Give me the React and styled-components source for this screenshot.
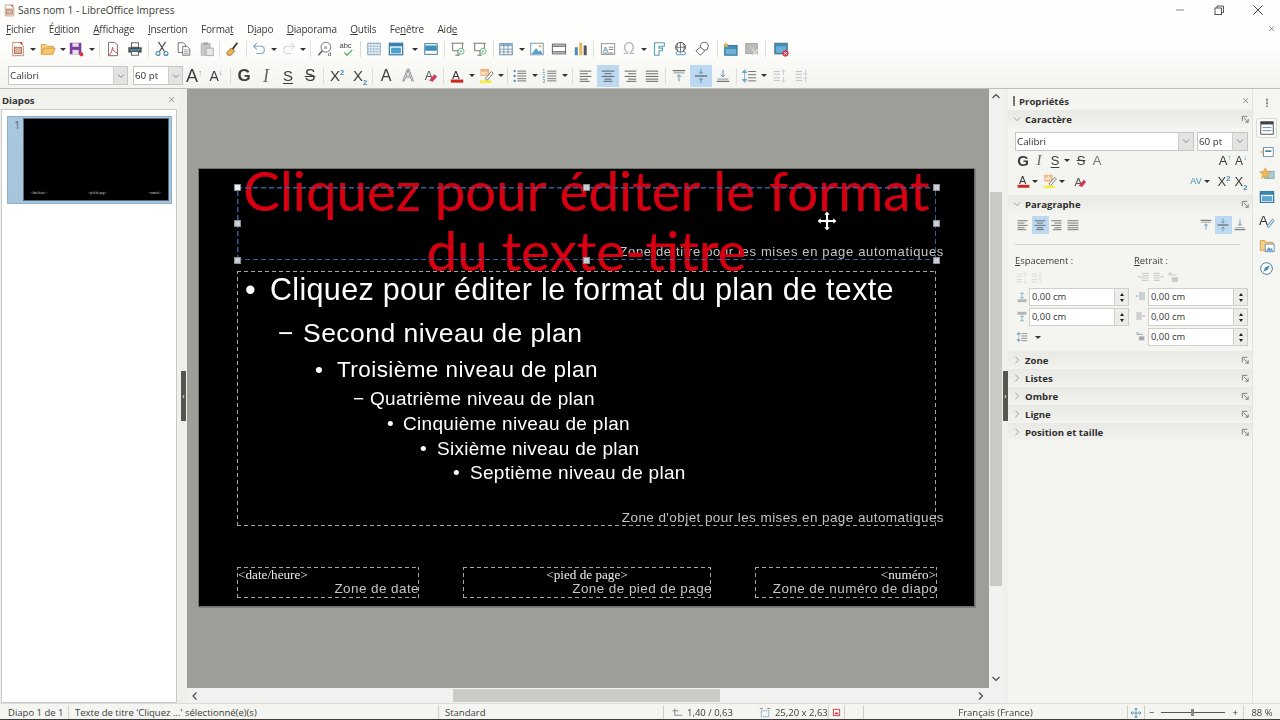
import React from 'react';
import styled, { createGlobalStyle, css } from 'styled-components';

const Global = createGlobalStyle`
  html, body { margin: 0; padding: 0; width: 1280px; height: 720px; overflow: hidden; background: #f4f4f0; }
  * { box-sizing: border-box; }
  body { font-family: "Open Sans", "Noto Sans", sans-serif; color: #333; }
`;

const BLUE = '#4a8bb0';

const dashes = (color, t, on, off) => css`
  background-image:
    repeating-linear-gradient(90deg, ${color} 0 ${on}px, transparent ${on}px ${on + off}px),
    repeating-linear-gradient(90deg, ${color} 0 ${on}px, transparent ${on}px ${on + off}px),
    repeating-linear-gradient(0deg, ${color} 0 ${on}px, transparent ${on}px ${on + off}px),
    repeating-linear-gradient(0deg, ${color} 0 ${on}px, transparent ${on}px ${on + off}px);
  background-size: 100% ${t}px, 100% ${t}px, ${t}px 100%, ${t}px 100%;
  background-position: 0 0, 0 100%, 0 0, 100% 0;
  background-repeat: no-repeat;
`;

const Page = styled.div`
  width: 1280px; height: 720px; display: flex; flex-direction: column; overflow: hidden;
  filter: blur(0.25px);
`;
const Top = styled.div`background: linear-gradient(#fefefc, #fdfdfb 55%, #f3f3ef);`;
const TitleBar = styled.div`
  height: 20px; display: flex; align-items: center; padding-left: 3px; font-size: 10.2px; color: #3a3a3a; gap: 2px;
`;
const WinButtons = styled.div`margin-left: auto; display: flex; margin-right: 3px;`;
const WinBtn = styled.div`width: 39px; height: 20px; display: flex; align-items: center; justify-content: center;`;
const MenuBar = styled.div`
  height: 18px; display: flex; align-items: center; padding-left: 6px; font-size: 10px; letter-spacing: -0.22px; color: #3a3a3a; position: relative;
  u { text-decoration-thickness: 1px; text-underline-offset: 1px; }
`;
const MenuItem = styled.span`margin-right: 13.5px;`;
const DocClose = styled.div`margin-left: auto; margin-right: 4px; display: flex;`;
const ToolRow = styled.div`height: ${p => p.$h}px; padding-bottom: ${p => p.$pb || 0}px; display: flex; align-items: center; position: relative;`;
const Slot = styled.div`
  flex: none; height: ${p => p.$h || 22}px; width: ${p => p.$w}px; margin-left: ${p => p.$ml}px;
  display: flex; align-items: center; justify-content: center;
  ${p => p.$active && css`background: #bcd9f1;`}
`;
const Sep = styled.div`width: 1px; height: 16px; background: #dcdcd8;`;
const Drop = styled.div`
  width: 0; height: 0; border-left: 3px solid transparent; border-right: 3px solid transparent; border-top: 3px solid #333;
`;
const Combo = styled.div`
  width: 100%; height: 19px; display: flex; align-items: stretch; background: #fff; border: 1px solid #c5c5c2;
`;
const ComboText = styled.div`flex: 1; font-size: 9.8px; line-height: 17px; padding-left: 1px; color: #333; white-space: nowrap; overflow: hidden;`;
const ComboBtn = styled.div`
  width: ${p => p.$w || 14}px; background: #e3e3e1; border-left: 1px solid #cfcfcc;
  display: flex; align-items: center; justify-content: center;
`;
const Glyph = styled.span`
  font-family: "Liberation Sans", sans-serif; font-size: ${p => p.$s || 14}px; line-height: 1; color: ${p => p.$c || '#3c3c3c'};
  font-weight: ${p => p.$b ? 700 : 400}; white-space: nowrap; position: relative;
  ${p => p.$serif && css`font-family: "Liberation Serif", serif; font-style: italic; color: #666;`}
  ${p => p.$u && css`text-decoration: underline; text-underline-offset: 2px;`}
  ${p => p.$x && css`text-decoration: line-through;`}
  ${p => p.$outline && css`color: #fff; -webkit-text-stroke: 0.7px #777;`}
  sup, sub { font-size: 7.5px; color: ${BLUE}; font-weight: 700; line-height: 0; }
`;

const Main = styled.div`flex: 1; display: flex; min-height: 0; border-top: 1px solid #bdbdb9;`;
const LeftPanel = styled.div`width: 178px; flex: none; background: #f1f1ee; display: flex; flex-direction: column;`;
const PanelHead = styled.div`
  height: 20px; flex: none; padding: 2px 2px 0; display: flex; align-items: center; justify-content: space-between;
  font-size: 9.6px; font-weight: 700; color: #333;
`;
const SlideList = styled.div`flex: 1; margin: 0 1px 0 1px; background: #fff; border: 1px solid #c8c8c5; padding: 6px 5px;`;
const SlideThumb = styled.div`
  height: 88px; width: 165px; background: linear-gradient(#a8c8e0, #a6c4dc); display: flex; padding: 2px 3px 3px 0;
  box-shadow: inset 0 0 0 1px #8fb0ca;
`;
const ThumbNum = styled.div`width: 16px; font-size: 10px; color: #46627a; text-align: right; padding: 0 3px 0 0; flex: none;`;
const ThumbSlide = styled.div`
  flex: 1; background: #000; border: 1px solid #5a6a78; display: flex; align-items: flex-end; justify-content: space-between; padding: 0 7px 5px;
`;
const ThumbText = styled.span`font-family: "Liberation Serif", serif; font-size: 3px; color: #ddd; line-height: 1;`;
const Splitter = styled.div`
  flex: none; width: ${p => p.$w}px; background: #efefec; display: flex; align-items: center; justify-content: flex-end;
  padding-right: ${p => p.$pr}px;
`;
const SplitHandle = styled.div`
  width: 5px; height: 50px; background: #55574f; display: flex; align-items: center; justify-content: center; flex: none;
  color: #fff; font-size: 7px; line-height: 1; font-family: "Liberation Sans", sans-serif; overflow: hidden;
`;
const Center = styled.div`flex: 1; display: flex; flex-direction: column; min-width: 0;`;
const CenterTop = styled.div`flex: 1; display: flex; min-height: 0;`;
const Workspace = styled.div`flex: 1; min-width: 0; background: #9e9e99; padding: 79px 0 0 11px;`;
const VScroll = styled.div`
  flex: none; width: 14px; background: #f1f1ef; display: flex; flex-direction: column; align-items: center; justify-content: space-between; padding: 3px 0 4px;
  position: relative;
`;
const VThumb = styled.div`position: absolute; top: 103px; left: 1px; width: 12px; height: 394px; background: #c9c9c6;`;
const HScroll = styled.div`
  flex: none; height: 15px; background: #f1f1ef; display: flex; align-items: center; justify-content: space-between; padding: 0 17px 0 3px; position: relative;
`;
const HThumb = styled.div`position: absolute; left: 266px; top: 1px; width: 267px; height: 13px; background: #cbcbc8;`;

const Slide = styled.div`
  position: relative; width: 777px; height: 439px; background: #000; border: 1px solid #70716c; box-shadow: 1px 1px 0 #80817c;
`;
const SlideLabel = styled.div`
  position: absolute; left: ${p => p.$x}px; top: ${p => p.$y}px; width: ${p => p.$w}px; font-family: "Liberation Sans", sans-serif;
  font-size: ${p => p.$s}px; color: #c4c4c4; text-align: right; white-space: nowrap; line-height: 1;
  letter-spacing: ${p => p.$ls}px;
`;
const Placeholder = styled.div`
  position: absolute; left: ${p => p.$x}px; top: ${p => p.$y}px; width: ${p => p.$w}px; height: ${p => p.$h}px;
  ${dashes('#a6a6a6', 1, 4, 3)}
`;
const FieldText = styled.div`
  position: absolute; left: ${p => p.$x}px; top: ${p => p.$y}px; width: ${p => p.$w}px; font-family: "Liberation Serif", serif; font-size: 13.2px; color: #eee;
  text-align: ${p => p.$a}; line-height: 1; white-space: nowrap;
`;
const SlideTitle = styled.div`
  position: absolute; left: 38px; top: -9px; width: 699px; font-family: Lato, sans-serif; font-size: 54.7px; line-height: 60px; color: #d60012; text-align: center; white-space: nowrap;
  -webkit-text-stroke: 0.2px #d60012;
`;
const Outline = styled.div`position: absolute; left: 38px; top: 102px; width: 699px; display: flex; flex-direction: column;`;
const Level = styled.div`
  display: flex; height: ${p => p.$h}px; align-items: center; font-family: "Liberation Sans", sans-serif; color: #fff; font-size: ${p => p.$s}px;
  padding-left: ${p => p.$x}px; white-space: nowrap; letter-spacing: ${p => p.$ls}px;
`;
const Bullet = styled.span`flex: none; width: ${p => p.$w}px;`;
const Selection = styled.div`
  position: absolute; left: 38px; top: 18px; width: 699px; height: 73px;
  ${dashes('#33609a', 1.5, 5, 3)}
`;
const Handle = styled.div`
  position: absolute; width: 7px; height: 7px; background: ${p => p.$first ? '#eceeef' : '#c9ccd0'}; border: 1px solid #8a8f96; left: ${p => p.$x}px; top: ${p => p.$y}px; margin: -3.5px;
`;
const Cursor = styled.svg`position: absolute; left: 617px; top: 41px;`;

const Sidebar = styled.div`width: 245px; flex: none; background: #f4f4f1; display: flex; flex-direction: column; border-right: 1px solid #e2e2de;`;
const SideHead = styled.div`
  height: 21px; flex: none; display: flex; align-items: center; padding: 3px 2px 0 5px; font-size: 9.6px; font-weight: 700; color: #333; gap: 4px;
`;
const Grip = styled.div`width: 2px; height: 10px; background-image: radial-gradient(#666 0.8px, transparent 1px); background-size: 2px 3px;`;
const CloseSlot = styled.div`margin-left: auto; display: flex;`;
const DeckHead = styled.div`
  height: 18px; flex: none; display: flex; align-items: center; padding: 0 2px 0 5px; font-size: 9.6px; font-weight: 700; color: #2d2d2d;
  background: linear-gradient(#e8e8e4, #f2f2ef); gap: 4px;
`;
const DeckBody = styled.div`padding-top: ${p => p.$pt}px; padding-bottom: ${p => p.$pb}px; display: flex; flex-direction: column;`;
const DeckRow = styled.div`display: flex; align-items: center; height: ${p => p.$h}px; flex: none; position: relative;`;
const Rule = styled.div`height: 1px; background: #cfcfcb; margin: 10px 12px 0 7px;`;
const Columns = styled.div`display: grid; grid-template-columns: 119px 110px; padding: 8px 0 0 7px; font-size: 9.4px; color: #3a3a3a;`;
const ColHead = styled.div`height: 15px; line-height: 15px; u { text-underline-offset: 1px; }`;
const IconLine = styled.div`height: 19px; display: flex; align-items: center; gap: 1px; padding-left: ${p => p.$pad}px; opacity: 0.55;`;
const SpinRow = styled.div`height: 20px; display: flex; align-items: center;`;
const SpinIcon = styled.div`width: 14px; flex: none; display: flex; align-items: center; justify-content: center;`;
const Spin = styled.div`
  width: ${p => p.$w}px; flex: none; height: 18px; background: #fff; border: 1px solid #cfcfcc; display: flex; font-size: 9.4px; line-height: 16px; color: #333;
`;
const SpinText = styled.div`flex: 1; padding-left: 2px;`;
const SpinBtns = styled.div`width: 14px; background: #ecece9; border-left: 1px solid #cfcfcc; display: flex; flex-direction: column; align-items: center; justify-content: center; gap: 3px;`;
const Up = styled.div`width: 0; height: 0; border-left: 2.5px solid transparent; border-right: 2.5px solid transparent; border-bottom: 3px solid #222;`;
const Down = styled(Up)`border-bottom: 0; border-top: 3px solid #222;`;
const TabBar = styled.div`width: 27px; flex: none; display: flex; flex-direction: column; align-items: center; background: #f5f5f2; padding-top: 5px;`;
const TabItem = styled.div`
  height: ${p => p.$h}px; width: 21px; flex: none; display: flex; align-items: center; justify-content: center; margin-top: ${p => p.$mt || 0}px;
  ${p => p.$active && css`border: 1px solid #d8d8d5; border-radius: 2px; background: #f9f9f7;`}
`;
const Dots = styled.div`width: 2px; height: 9px; background-image: radial-gradient(#888 0.7px, transparent 1px); background-size: 2px 3.5px;`;

const StatusBar = styled.div`
  height: 17px; flex: none; display: flex; align-items: stretch; font-size: 9.5px; color: #3d3d3d; background: #f4f4f1;
  border-bottom: 1px solid #3c3c3c; border-top: 1px solid #dcdcd8;
`;
const Cell = styled.div`
  width: ${p => p.$w}px; flex: none; display: flex; align-items: center; justify-content: ${p => p.$j || 'flex-start'}; padding-left: ${p => p.$p || 0}px; padding-top: 1px; gap: 4px;
  border-right: ${p => p.$nb ? 0 : '1px solid #cfcfcb'}; white-space: nowrap; margin: 1px 0 0;
`;
const CellGap = styled.span`width: 18px;`;
const ZoomTrack = styled.div`width: 64px; height: 1px; background: #555; position: relative; margin: 0 3px;`;
const ZoomKnob = styled.div`position: absolute; left: 30px; top: -3px; width: 3px; height: 7px; background: #888;`;
const Svg = styled.svg`display: block; flex: none;`;

/* ---------- icons ---------- */
const L = ({ d, c = '#555', w = 1 }) => d.map(([a, b, y], i) => <line key={i} x1={a} x2={b} y1={y} y2={y} stroke={c} strokeWidth={w} />);
const I = {
  newdoc: <><path d="M3 1.5h8l4 4v11H3z" fill="#fff" stroke="#b9846a" /><path d="M10 1l4 0v4z" fill="#d9503f" /><rect x="5" y="7" width="8" height="7" fill="#d7b79f" stroke="#a66f52" /></>,
  open: <><path d="M1.5 15V4h5l1.500 2h7v2" fill="#f6d28b" stroke="#d39a3c" /><path d="M1.500 15l2.500-7h13l-2.500 7z" fill="#f5c56b" stroke="#d39a3c" /></>,
  save: <><path d="M2 2h13v13H2z" fill="#7c3f9d" /><rect x="5" y="2.500" width="7" height="4" fill="#e8dced" /><rect x="5" y="10" width="7" height="5" fill="#e8dced" /><circle cx="15" cy="15" r="2.300" fill="#e2323c" /></>,
  pdf: <><path d="M4 1.500h7l3 3v12H4z" fill="#fff" stroke="#666" /><path d="M4 16c3-1 4-5 4.500-9 .5 4 2 6 6 6" fill="none" stroke="#cf3f3f" /></>,
  print: <><rect x="5" y="2" width="8" height="5" fill="#fff" stroke="#555" /><rect x="1.500" y="7" width="15" height="6" fill="#4a4a4a" /><rect x="3" y="9" width="12" height="2" fill="#4a8bb0" /><rect x="5" y="12" width="8" height="4" fill="#fff" stroke="#555" /></>,
  cut: <><path d="M5 1l7 11M13 1L6 12" stroke="#444" strokeWidth="1.200" fill="none" /><circle cx="4.500" cy="14" r="2.200" fill="none" stroke={BLUE} strokeWidth="1.300" /><circle cx="13.500" cy="14" r="2.200" fill="none" stroke={BLUE} strokeWidth="1.300" /></>,
  copy: <><path d="M2.500 2h6l2 2v9h-8z" fill="#fff" stroke="#666" /><path d="M7.500 6h5l3 3v7h-8z" fill="#fff" stroke="#666" /><L d={[[9, 14, 10], [9, 14, 12], [9, 14, 14]]} c="#9a9a9a" /></>,
  paste: <><rect x="2.500" y="3" width="10" height="13" fill="#c8c8c6" stroke="#b0b0ae" /><rect x="5" y="1.500" width="5" height="3" fill="#a9a9a7" /><rect x="8" y="8" width="8" height="8.500" fill="#e6e6e4" stroke="#aaa" /></>,
  clone: <><path d="M9 10l6-8" stroke="#333" strokeWidth="2" /><path d="M3 13l5-5 4 3-4 5-4 0z" fill="#e3b25a" stroke="#a97b2f" /></>,
  undo: <><path d="M3 6h8a4 4 0 0 1 0 8H6" fill="none" stroke="#7ea7c0" strokeWidth="1.200" /><path d="M6.500 2.500L3 6l3.500 3.500" fill="none" stroke="#7ea7c0" strokeWidth="1.200" /></>,
  redo: <><path d="M15 6H7a4 4 0 0 0 0 8h5" fill="none" stroke="#d5d5d2" strokeWidth="1.200" /><path d="M11.500 2.500L15 6l-3.500 3.500" fill="none" stroke="#d5d5d2" strokeWidth="1.200" /></>,
  find: <><circle cx="10" cy="7" r="5.500" fill="#fff" stroke="#666" /><path d="M6 11l-4.500 5" stroke="#555" strokeWidth="1.600" /><text x="7.600" y="9.500" fontSize="7" fontFamily="Liberation Sans" fill={BLUE}>a</text><text x="12" y="17" fontSize="7" fontFamily="Liberation Sans" fill="#444">d</text></>,
  spell: <><text x="0.500" y="8" fontSize="8.500" fontFamily="Liberation Sans" fill="#444">abc</text><path d="M6 13l3 3 6-6" fill="none" stroke="#57b06d" strokeWidth="1.500" /></>,
  grid: <><rect x="2" y="2.500" width="14" height="13" fill="#eef3f7" stroke="#7b9bb0" /><path d="M2 6h14M2 9h14M2 12h14M5.500 2v14M9 2v14M12.500 2v14" stroke={BLUE} strokeWidth=".8" strokeDasharray="1 1" /></>,
  master: <><rect x="1.500" y="2.500" width="15" height="13" fill="#fff" stroke="#2f6f96" strokeWidth="1.300" /><rect x="2" y="3" width="14" height="3" fill="#2f7fae" /><rect x="3.500" y="7.500" width="11" height="6.500" fill="#4aa0cf" /></>,
  slide: <><rect x="2" y="3" width="14" height="12" fill="#fff" stroke="#2f6f96" /><rect x="2.500" y="5" width="13" height="6" fill="#3f8fbe" /></>,
  startA: <><path d="M1.500 2.500h14M3 3v8h11V3" fill="#fff" stroke="#666" /><path d="M9 11v5M6 16h5" stroke="#666" /><circle cx="12.500" cy="11.500" r="3.300" fill="#fff" stroke="#5bb075" /><path d="M11.500 10l2.500 1.500-2.500 1.500z" fill="#5bb075" /></>,
  table: <><rect x="2" y="3" width="14" height="12.500" fill="#fff" stroke="#557f99" /><rect x="2" y="3" width="14" height="3" fill="#8eb6cf" /><path d="M2 9.200h14M2 12.300h14M6.600 3v12M11.300 3v12" stroke="#557f99" strokeWidth=".8" /></>,
  image: <><rect x="2" y="2.500" width="14" height="13" fill="#fff" stroke="#6b8da3" /><path d="M3 14.500L8 8l3 4 2-2 2 4.500z" fill="#5a9fc9" /><circle cx="12.500" cy="6" r="1.500" fill="#edba5a" /></>,
  video: <><rect x="1.500" y="3.500" width="15" height="11" fill="#fff" stroke="#555" /><path d="M1.500 6h15M1.500 12h15" stroke="#555" /><path d="M3 5h12M3 13.200h12" stroke="#555" strokeDasharray="1 1.200" /></>,
  chart: <><rect x="2" y="7" width="3.400" height="9" fill="#4a8bb0" /><rect x="7" y="2" width="3.400" height="14" fill="#eab65a" /><rect x="12" y="5" width="3.400" height="11" fill="#555" /></>,
  textbox: <><rect x="1.500" y="3" width="15" height="12" fill="#fff" stroke="#888" /><text x="3" y="12" fontSize="9" fontFamily="Liberation Sans" fill={BLUE}>A</text><L d={[[10, 15, 7], [10, 15, 9.500], [3, 15, 13.500]]} c="#777" /></>,
  fontwork: <path d="M4 2h11v4H9v2h4v3H9v5H4z" fill="#fff" stroke="#5a9ab5" strokeWidth="1.200" />,
  link: <><circle cx="8.500" cy="7" r="5.500" fill="#fff" stroke="#444" /><path d="M3 7h11M8.500 1.500v11M5.500 2.500c-1.500 3-1.500 6 0 9M11.500 2.500c1.500 3 1.500 6 0 9" stroke="#444" strokeWidth=".8" fill="none" /><rect x="3.500" y="12" width="6" height="3.500" rx="1.700" fill="#fff" stroke={BLUE} /><rect x="8" y="12" width="6" height="3.500" rx="1.700" fill="#fff" stroke={BLUE} /></>,
  shapes: <><circle cx="10.500" cy="6" r="4.500" fill="#fff" stroke="#555" /><path d="M6 7l5 4-5 5-5-5z" fill="#fff" stroke="#555" /></>,
  newslide: <><rect x="3" y="5" width="14" height="11" fill="#3f8fbe" stroke="#33708f" /><rect x="4" y="9" width="12" height="6" fill="#71b1d6" /><path d="M4.500 1l1 2.300 2.500.2-2 1.600.7 2.400-2.200-1.300-2.200 1.300.7-2.400-2-1.600 2.500-.2z" fill="#eab65a" /></>,
  delslide: <><rect x="2" y="3" width="13" height="11" fill="#bcbcba" stroke="#9a9a98" /><path d="M9 9l7 7M16 9l-7 7" stroke="#ddd" strokeWidth="1.300" /></>,
  hideslide: <><rect x="2" y="2.500" width="14" height="12" fill="#3f8fbe" stroke="#4f6a7a" /><rect x="3.500" y="6" width="11" height="7" fill="#6fb0d6" /><circle cx="14" cy="14" r="3.500" fill="#d23a45" /><path d="M12.500 12.500l3 3M15.500 12.500l-3 3" stroke="#fff" /></>,
  acolor: <><text x="3.500" y="12" fontSize="13" fontFamily="Liberation Sans" fill="#333">A</text><rect x="2" y="13" width="14" height="3.500" fill="#cf2a20" /></>,
  hilite: <><rect x="1.500" y="1" width="10" height="8" fill="#eeb57f" /><text x="2" y="7.500" fontSize="7" fontFamily="Liberation Sans" fill="#fff">ab</text><path d="M7 12l7-8 2 2-7 8z" fill="#fff" stroke="#666" /><rect x="1" y="14" width="13" height="3" fill="#f2ee3c" /></>,
  aclear: <><text x="3" y="14" fontSize="14" fontFamily="Liberation Sans" fill="#555">A</text><path d="M8 14l6-7 3 2.500-5 6z" fill="#d23a55" /></>,
  bullets: <><circle cx="3" cy="3.500" r="1.300" fill={BLUE} /><circle cx="3" cy="9" r="1.300" fill={BLUE} /><circle cx="3" cy="14.500" r="1.300" fill={BLUE} /><L d={[[6, 16, 3.500], [6, 16, 6], [6, 16, 9], [6, 16, 12], [6, 16, 14.500]]} c="#666" /></>,
  numbers: <><text x="0.500" y="6" fontSize="5.500" fontFamily="Liberation Sans" fill={BLUE}>1</text><text x="0.500" y="11.500" fontSize="5.500" fontFamily="Liberation Sans" fill={BLUE}>2</text><text x="0.500" y="17" fontSize="5.500" fontFamily="Liberation Sans" fill={BLUE}>3</text><L d={[[6, 16, 3.500], [6, 16, 6], [6, 16, 9], [6, 16, 12], [6, 16, 14.500]]} c="#666" /></>,
  aleft: <L d={[[2, 15, 3.500], [2, 11, 6.500], [2, 15, 9.500], [2, 11, 12.500], [2, 13, 15]]} />,
  acenter: <L d={[[2, 16, 3.500], [5, 13, 6.500], [2, 16, 9.500], [5, 13, 12.500], [4, 14, 15]]} />,
  aright: <L d={[[3, 16, 3.500], [7, 16, 6.500], [3, 16, 9.500], [7, 16, 12.500], [5, 16, 15]]} />,
  ajust: <L d={[[2, 16, 3.500], [2, 16, 6.500], [2, 16, 9.500], [2, 16, 12.500], [2, 16, 15]]} />,
  vtop: <><L d={[[2, 16, 3]]} c="#666" w={1.300} /><L d={[[3, 15, 5.500]]} c="#888" /><path d="M9 15V8M6.500 10L9 7.500l2.500 2.500" fill="none" stroke={BLUE} /></>,
  vmid: <><L d={[[2, 16, 9]]} c="#555" w={1.300} /><path d="M9 1v5M7 4.500L9 6.500l2-2M9 17v-5M7 13.500L9 11.500l2 2" fill="none" stroke={BLUE} /></>,
  vbot: <><L d={[[2, 16, 15]]} c="#666" w={1.300} /><L d={[[3, 15, 12.500]]} c="#888" /><path d="M9 2v7M6.500 7.500L9 10l2.500-2.500" fill="none" stroke={BLUE} /></>,
  spacing: <><path d="M4 2L1.500 5h5zM4 16l-2.500-3h5zM4 5v8" fill="#7fb1cd" stroke={BLUE} strokeWidth=".7" /><L d={[[8, 17, 4], [8, 17, 7.500], [8, 17, 11], [8, 17, 14.500]]} c="#666" /></>,
  incsp: <><L d={[[2, 9, 4], [2, 9, 7], [2, 9, 11], [2, 9, 14]]} c="#bbb" /><path d="M13 8V2M11 4l2-2 2 2M13 10v6M11 14l2 2 2-2" fill="none" stroke="#b9c9d4" /></>,
  decsp: <><L d={[[2, 9, 4], [2, 9, 7], [2, 9, 11], [2, 9, 14]]} c="#bbb" /><path d="M13 2v6M11 6l2 2 2-2M13 16v-6M11 12l2-2 2 2" fill="none" stroke="#b9c9d4" /></>,
  props: <><rect x="2" y="2" width="14" height="14" fill="#fff" stroke="#444" /><rect x="2" y="2" width="14" height="3" fill="#444" /><L d={[[4, 14, 8.500], [4, 14, 12]]} c={BLUE} /></>,
  anim: <><path d="M1 9l5-5v10z" fill="#eeb57f" opacity=".7" /><rect x="5" y="4" width="11" height="10" fill="#fff" stroke="#6b8da3" /><rect x="7" y="7" width="7" height="2" fill={BLUE} /></>,
  star: <><rect x="6" y="6" width="11" height="8" fill="#a9c9dd" stroke="#8aa" /><path d="M7 2l2 4 4.500.4-3.400 3 1 4.500L7 11.500 2.900 14l1-4.500-3.400-3L5 6z" fill="#eab65a" stroke="#c9922f" strokeWidth=".5" /></>,
  master2: <><rect x="1.500" y="3" width="15" height="12" fill="#fff" stroke="#2f6f96" strokeWidth="1.300" /><rect x="2" y="3.500" width="14" height="3" fill="#2f7fae" /><rect x="3" y="8" width="12" height="5.500" fill="#5aa7d2" /></>,
  styles: <><text x="0" y="13" fontSize="15" fontFamily="Liberation Sans" fill="#333">A</text><path d="M9 15l6-8 2 1.500-6 8z" fill="#d7e6f0" stroke={BLUE} /></>,
  gallery: <><path d="M1.500 15V4h5l1 2h8v9z" fill="#f6d28b" stroke="#d39a3c" /><rect x="7" y="8" width="10" height="8.500" fill="#fff" stroke="#6b8da3" /><path d="M8 15.500l3-4 2 2 1-1 2 3z" fill="#5a9fc9" /></>,
  navig: <><circle cx="9" cy="9" r="7" fill="#fff" stroke="#3f7896" strokeWidth="1.200" /><path d="M13 5l-2.500 5.500L5 13l2.500-5.500z" fill={BLUE} /></>,
  launcher: <><path d="M1.500 7V1.500H7" fill="none" stroke="#777" /><path d="M3 3l5 5M8 4.500V8H4.500" fill="none" stroke="#777" /></>,
  x: <path d="M1.500 1.500l6 6M7.500 1.500l-6 6" stroke="#777" />,
  arrowUp: <path d="M1.500 6L5 2.500 8.500 6" fill="none" stroke="#444" strokeWidth="1.100" />,
  arrowDown: <path d="M1.500 3L5 6.500 8.500 3" fill="none" stroke="#444" strokeWidth="1.100" />,
  arrowLeft: <path d="M6.500 1.500L3 5l3.500 3.500" fill="none" stroke="#444" strokeWidth="1.100" />,
  arrowRight: <path d="M3 1.500L6.500 5 3 8.500" fill="none" stroke="#444" strokeWidth="1.100" />,
  chevDown: <path d="M1 3l4 4 4-4" fill="none" stroke="#8a8a8a" />,
  chevRight: <path d="M3 1l4 4-4 4" fill="none" stroke="#8a8a8a" />,
  combo: <path d="M2 3.500l3 3 3-3" fill="none" stroke="#888" />,
  winMin: <path d="M1 5h8" stroke="#888" />,
  winMax: <><rect x="1" y="3" width="6.500" height="6.500" fill="none" stroke="#555" /><path d="M3 3V1h6.500v6.500H7.500" fill="none" stroke="#555" /></>,
  winX: <path d="M.5.5l9 9M9.500.5l-9 9" stroke="#333" strokeWidth=".9" />,
  sbAbove: <><rect x="2" y="11" width="12" height="4" fill="#b5b5b3" /><path d="M8 3v6M5.500 3h5M5.500 9h5" stroke="#6f9db8" /></>,
  sbBelow: <><rect x="2" y="1" width="12" height="4" fill="#b5b5b3" /><path d="M8 7v6M5.500 13h5M5.500 7h5" stroke="#6f9db8" /></>,
  indL: <><L d={[[6, 15, 3], [6, 15, 6], [6, 15, 9], [6, 15, 12]]} c="#888" /><path d="M1 7.500h4" stroke={BLUE} /></>,
  indR: <><L d={[[2, 10, 3], [2, 10, 6], [2, 10, 9], [2, 10, 12]]} c="#888" /><path d="M11 7.500h4" stroke={BLUE} /></>,
  indF: <><path d="M2 3h4" stroke={BLUE} /><rect x="6" y="8" width="8" height="6" fill="#aaa" /><path d="M2 5h10" stroke="#888" /></>,
  sbSave: <><rect x="1.500" y="1.500" width="7" height="7" fill="#fff" stroke="#d23a45" /><rect x="3" y="5" width="4" height="2" fill="#d23a45" /></>,
  sbPos: <path d="M5 2v9h10M2 5h8" fill="none" stroke="#667" />,
  sbSize: <><rect x="3" y="5" width="10" height="8" fill="none" stroke={BLUE} strokeDasharray="2 1" /><path d="M1 2h4M11 2h4" stroke="#667" /></>,
  sbFit: <path d="M6 0v12M0 6h12M4 2l2-2 2 2M4 10l2 2 2-2M2 4L0 6l2 2M10 4l2 2-2 2" fill="none" stroke={BLUE} />,
  cur: <path d="M11 1l3.500 4H12.500v4.500H17V7.500l4 3.500-4 3.500v-2H12.500V17h2L11 21l-3.500-4h2v-4.500H5v2L1 11l4-3.500v2h4.500V5h-2z" fill="#fff" stroke="#000" />,
};
const Icon = ({ n, s = 16, b = 18 }) => <Svg width={s} height={s} viewBox={`0 0 ${b} ${b}`}>{I[n]}</Svg>;
const Sm = ({ n, s = 10 }) => <Icon n={n} s={s} b={10} />;

const place = (items, origin = 0) => {
  let edge = origin;
  return items.map((it) => {
    const w = it.w || (it.k === 'drop' ? 8 : it.k === 'sep' ? 1 : it.active ? 22 : 20);
    const left = it.x - w / 2;
    const out = { ...it, w, ml: left - edge };
    edge = left + w;
    return out;
  });
};
const Items = ({ items, origin = 0, h }) => place(items, origin).map((it, i) => (
  <Slot key={i} $w={it.w} $ml={it.ml} $active={it.active} $h={h}>
    {it.k === 'drop' ? <Drop /> : it.k === 'sep' ? <Sep /> : it.node ? it.node : <Icon n={it.k} s={it.s || 16} />}
  </Slot>
));
const mk = (a) => a.map(([x, k, extra]) => ({ x, k, ...(extra || {}) }));

const row1 = mk([[18, 'newdoc'], [33, 'drop'], [48, 'open'], [63, 'drop'], [76, 'save'], [92, 'drop'], [99, 'sep'], [113, 'pdf'], [135, 'print'], [148, 'sep'], [162, 'cut'], [184, 'copy'], [207, 'paste'], [219, 'sep'], [232, 'clone'], [246, 'sep'], [259, 'undo'], [274, 'drop'], [289, 'redo'], [303, 'drop'], [310, 'sep'], [325, 'find'], [347, 'spell'], [360, 'sep'], [374, 'grid'], [396, 'master'], [415, 'drop'], [431, 'slide'], [444, 'sep'], [458, 'startA'], [480, 'startA'], [493, 'sep'], [506, 'table'], [522, 'drop'], [537, 'image'], [559, 'video'], [581, 'chart'], [593, 'sep'], [608, 'textbox'], [629, '', { node: <Glyph $s={16} $c="#bcbcba">Ω</Glyph> }], [644, 'drop'], [659, 'fontwork'], [681, 'link'], [703, 'shapes'], [717, 'sep'], [730, 'newslide'], [752, 'delslide'], [765, 'sep'], [781, 'hideslide']]);

const FontCombo = ({ label, btn }) => (
  <Combo><ComboText>{label}</ComboText><ComboBtn $w={btn}><Sm n="combo" /></ComboBtn></Combo>
);
const row2 = mk([[68, '', { w: 120, node: <FontCombo label="Calibri" btn={14} /> }], [158, '', { w: 50, node: <FontCombo label="60 pt" btn={14} /> }], [194, '', { node: <Glyph $s={18}>A<sup>↑</sup></Glyph> }], [216, '', { node: <Glyph $s={14}>A<sup>↓</sup></Glyph> }], [230, 'sep'], [244, '', { node: <Glyph $s={17} $b>G</Glyph> }], [266, '', { node: <Glyph $s={18} $serif>I</Glyph> }], [288, '', { node: <Glyph $s={15} $u>S</Glyph> }], [310, '', { node: <Glyph $s={16} $x>S</Glyph> }], [323, 'sep'], [337, '', { node: <Glyph $s={15}>X<sup>2</sup></Glyph> }], [360, '', { node: <Glyph $s={15}>X<sub>2</sub></Glyph> }], [372, 'sep'], [386, '', { node: <Glyph $s={16}>A</Glyph> }], [408, '', { node: <Glyph $s={16} $outline>A</Glyph> }], [430, 'aclear'], [443, 'sep'], [457, 'acolor'], [472, 'drop'], [487, 'hilite'], [501, 'drop'], [507, 'sep'], [520, 'bullets'], [535, 'drop'], [550, 'numbers'], [565, 'drop'], [572, 'sep'], [586, 'aleft'], [608, 'acenter', { active: true }], [630, 'aright'], [652, 'ajust'], [665, 'sep'], [679, 'vtop'], [701, 'vmid', { active: true }], [723, 'vbot'], [736, 'sep'], [749, 'spacing'], [764, 'drop'], [780, 'incsp'], [802, 'decsp']]);

const O = 1008;
const charRow1 = mk([[1023, '', { node: <Glyph $s={15} $b>G</Glyph> }], [1039, '', { node: <Glyph $s={15} $serif>I</Glyph> }], [1055, '', { node: <Glyph $s={13} $u>S</Glyph> }], [1067, 'drop'], [1081, '', { node: <Glyph $s={13} $x>S</Glyph> }], [1097, '', { node: <Glyph $s={13} $c="#777">A</Glyph> }], [1225, '', { node: <Glyph $s={13}>A<sup>↑</sup></Glyph> }], [1241, '', { node: <Glyph $s={12}>A<sup>↓</sup></Glyph> }]]);
const charRow2 = mk([[1023, 'acolor', { s: 15 }], [1035, 'drop'], [1050, 'hilite', { s: 15 }], [1062, 'drop'], [1079, 'aclear', { s: 15 }], [1196, '', { node: <Glyph $s={9} $c="#4a8bb0">AV</Glyph> }], [1207, 'drop'], [1224, '', { node: <Glyph $s={13}>X<sup>2</sup></Glyph> }], [1241, '', { node: <Glyph $s={13}>X<sub>2</sub></Glyph> }]]);
const paraRow = mk([[1023, 'aleft', { s: 14, w: 16 }], [1040, 'acenter', { s: 14, w: 17, active: true }], [1056, 'aright', { s: 14, w: 15 }], [1073, 'ajust', { s: 14, w: 16 }], [1206, 'vtop', { s: 14, w: 16 }], [1223, 'vmid', { s: 14, w: 17, active: true }], [1240, 'vbot', { s: 14, w: 16 }]]);

const Deck = ({ title, open, children }) => (
  <>
    <DeckHead>
      <Sm n={open ? 'chevDown' : 'chevRight'} s={8} />
      <span>{title}</span>
      <CloseSlot><Sm n="launcher" s={9} /></CloseSlot>
    </DeckHead>
    {children}
  </>
);
const SpinBox = ({ w }) => (
  <Spin $w={w}><SpinText>0,00 cm</SpinText><SpinBtns><Up /><Down /></SpinBtns></Spin>
);

export default function App() {
  return (
    <Page>
      <Global />
      <Top>
        <TitleBar>
          <Icon n="newdoc" s={13} b={18} />
          <span>Sans nom 1 - LibreOffice Impress</span>
          <WinButtons>
            <WinBtn><Sm n="winMin" /></WinBtn>
            <WinBtn><Sm n="winMax" /></WinBtn>
            <WinBtn><Sm n="winX" /></WinBtn>
          </WinButtons>
        </TitleBar>
        <MenuBar>
          <MenuItem><u>F</u>ichier</MenuItem>
          <MenuItem>É<u>d</u>ition</MenuItem>
          <MenuItem><u>A</u>ffichage</MenuItem>
          <MenuItem><u>I</u>nsertion</MenuItem>
          <MenuItem>Forma<u>t</u></MenuItem>
          <MenuItem>D<u>i</u>apo</MenuItem>
          <MenuItem><u>D</u>iaporama</MenuItem>
          <MenuItem><u>O</u>utils</MenuItem>
          <MenuItem>Fe<u>n</u>être</MenuItem>
          <MenuItem>Aid<u>e</u></MenuItem>
          <DocClose><Sm n="x" s={8} /></DocClose>
        </MenuBar>
        <ToolRow $h={25} $pb={3}><Items items={row1} /></ToolRow>
        <ToolRow $h={25}><Items items={row2} /></ToolRow>
      </Top>
      <Main>
        <LeftPanel>
          <PanelHead>
            <span>Diapos</span>
            <Sm n="x" s={8} />
          </PanelHead>
          <SlideList>
            <SlideThumb>
              <ThumbNum>1</ThumbNum>
              <ThumbSlide>
                <ThumbText>&lt;date/heure&gt;</ThumbText>
                <ThumbText>&lt;pied de page&gt;</ThumbText>
                <ThumbText>&lt;numéro&gt;</ThumbText>
              </ThumbSlide>
            </SlideThumb>
          </SlideList>
        </LeftPanel>
        <Splitter $w={9} $pr={1}><SplitHandle>‹</SplitHandle></Splitter>
        <Center>
          <CenterTop>
            <Workspace>
              <Slide>
                <SlideLabel $x={38} $y={76} $w={707} $s={13} $ls={0.65}>Zone de titre pour les mises en page automatiques</SlideLabel>
                <SlideTitle>Cliquez pour éditer le format<br />du texte-titre</SlideTitle>
                <Selection />
                <Handle $first $x={38.5} $y={18.5} /><Handle $x={387.5} $y={18.5} /><Handle $x={737.5} $y={18.5} />
                <Handle $x={38.5} $y={54.5} /><Handle $x={737.5} $y={54.5} />
                <Handle $x={38.5} $y={91.5} /><Handle $x={387.5} $y={91.5} /><Handle $x={737.5} $y={91.5} />
                <Placeholder $x={38} $y={102} $w={699} $h={255} />
                <Outline>
                  <Level $h={36} $s={30.5} $ls={0.33} $x={8}><Bullet $w={25}>•</Bullet>Cliquez pour éditer le format du plan de texte</Level>
                  <Level $h={52} $s={26.5} $ls={0.47} $x={41}><Bullet $w={25}>−</Bullet>Second niveau de plan</Level>
                  <Level $h={22} $s={22.5} $ls={0.43} $x={78}><Bullet $w={22}>•</Bullet>Troisième niveau de plan</Level>
                  <Level $h={36} $s={19} $ls={0.3} $x={116}><Bullet $w={17}>−</Bullet>Quatrième niveau de plan</Level>
                  <Level $h={14} $s={19} $ls={0.3} $x={150}><Bullet $w={16}>•</Bullet>Cinquième niveau de plan</Level>
                  <Level $h={35} $s={19} $ls={0.27} $x={183}><Bullet $w={17}>•</Bullet>Sixième niveau de plan</Level>
                  <Level $h={14} $s={19} $ls={0.28} $x={216}><Bullet $w={17}>•</Bullet>Septième niveau de plan</Level>
                </Outline>
                <SlideLabel $x={38} $y={342} $w={707} $s={13.5} $ls={0.42}>Zone d'objet pour les mises en page automatiques</SlideLabel>
                <Placeholder $x={38} $y={398} $w={182} $h={31} />
                <Placeholder $x={264} $y={398} $w={248} $h={31} />
                <Placeholder $x={556} $y={398} $w={182} $h={31} />
                <FieldText $x={39} $y={399} $w={180} $a="left">&lt;date/heure&gt;</FieldText>
                <FieldText $x={264} $y={399} $w={248} $a="center">&lt;pied de page&gt;</FieldText>
                <FieldText $x={556} $y={399} $w={181} $a="right">&lt;numéro&gt;</FieldText>
                <SlideLabel $x={38} $y={413} $w={182} $s={13.5} $ls={0.42}>Zone de date</SlideLabel>
                <SlideLabel $x={264} $y={413} $w={249} $s={13.5} $ls={0.42}>Zone de pied de page</SlideLabel>
                <SlideLabel $x={556} $y={413} $w={182} $s={13.5} $ls={0.42}>Zone de numéro de diapo</SlideLabel>
                <Cursor width="22" height="22" viewBox="0 0 22 22">{I.cur}</Cursor>
              </Slide>
            </Workspace>
            <VScroll>
              <Sm n="arrowUp" />
              <VThumb />
              <Sm n="arrowDown" />
            </VScroll>
          </CenterTop>
          <HScroll>
            <Sm n="arrowLeft" />
            <HThumb />
            <Sm n="arrowRight" />
          </HScroll>
        </Center>
        <Splitter $w={5} $pr={0}><SplitHandle>›</SplitHandle></Splitter>
        <Sidebar>
          <SideHead>
            <Grip />
            <span>Propriétés</span>
            <CloseSlot><Sm n="x" s={8} /></CloseSlot>
          </SideHead>
          <Deck title="Caractère" open>
            <DeckBody $pt={4} $pb={3}>
              <DeckRow $h={18}>
                <Items items={mk([[1104.5, '', { w: 179, node: <FontCombo label="Calibri" btn={15} /> }], [1222.5, '', { w: 51, node: <FontCombo label="60 pt" btn={15} /> }]])} origin={O} />
              </DeckRow>
              <DeckRow $h={21}><Items items={charRow1} origin={O} h={18} /></DeckRow>
              <DeckRow $h={21}><Items items={charRow2} origin={O} h={18} /></DeckRow>
            </DeckBody>
          </Deck>
          <Deck title="Paragraphe" open>
            <DeckBody $pt={3} $pb={4}>
              <DeckRow $h={18}><Items items={paraRow} origin={O} h={18} /></DeckRow>
              <Rule />
              <Columns>
                <div>
                  <ColHead><u>E</u>spacement :</ColHead>
                  <IconLine $pad={0}><Icon n="incsp" s={14} /><Icon n="decsp" s={14} /></IconLine>
                  <SpinRow><SpinIcon><Icon n="sbAbove" s={12} b={16} /></SpinIcon><SpinBox w={100} /></SpinRow>
                  <SpinRow><SpinIcon><Icon n="sbBelow" s={12} b={16} /></SpinIcon><SpinBox w={100} /></SpinRow>
                  <SpinRow><SpinIcon><Icon n="spacing" s={12} /></SpinIcon><Slot $w={14} $ml={2} $h={12}><Drop /></Slot></SpinRow>
                </div>
                <div>
                  <ColHead><u>R</u>etrait :</ColHead>
                  <IconLine $pad={3}><Icon n="indL" s={14} /><Icon n="indR" s={14} /><Icon n="indF" s={14} /></IconLine>
                  <SpinRow><SpinIcon><Icon n="indL" s={12} /></SpinIcon><SpinBox w={100} /></SpinRow>
                  <SpinRow><SpinIcon><Icon n="indR" s={12} /></SpinIcon><SpinBox w={100} /></SpinRow>
                  <SpinRow><SpinIcon><Icon n="indF" s={12} /></SpinIcon><SpinBox w={100} /></SpinRow>
                </div>
              </Columns>
            </DeckBody>
          </Deck>
          <Deck title="Zone" />
          <Deck title="Listes" />
          <Deck title="Ombre" />
          <Deck title="Ligne" />
          <Deck title="Position et taille" />
        </Sidebar>
        <TabBar>
          <TabItem $h={16}><Dots /></TabItem>
          <TabItem $h={20} $mt={8} $active><Icon n="props" /></TabItem>
          <TabItem $h={20} $mt={4}><Icon n="anim" /></TabItem>
          <TabItem $h={20} $mt={2}><Icon n="star" /></TabItem>
          <TabItem $h={20} $mt={3}><Icon n="master2" /></TabItem>
          <TabItem $h={20} $mt={4}><Icon n="styles" /></TabItem>
          <TabItem $h={20} $mt={4}><Icon n="gallery" /></TabItem>
          <TabItem $h={20} $mt={3}><Icon n="navig" s={15} /></TabItem>
        </TabBar>
      </Main>
      <StatusBar>
        <Cell $w={69} $p={8}>Diapo 1 de 1</Cell>
        <Cell $w={370} $p={6}>Texte de titre 'Cliquez ...' sélectionné(e)(s)</Cell>
        <Cell $w={225} $p={6}>Standard</Cell>
        <Cell $w={165} $p={7}><Icon n="sbPos" s={12} b={16} /> <span>1,40 / 0,63</span><CellGap /><Icon n="sbSize" s={12} b={16} /><span>25,20 x 2,63</span></Cell>
        <Cell $w={16} $j="center"><Sm n="sbSave" s={9} /></Cell>
        <Cell $w={19} />
        <Cell $w={264} $j="center">Français (France)</Cell>
        <Cell $w={17} $j="center"><Icon n="sbFit" s={10} b={12} /></Cell>
        <Cell $w={99} $p={4}><span>−</span><ZoomTrack><ZoomKnob /></ZoomTrack><span>+</span></Cell>
        <Cell $w={36} $j="center" $nb>88 %</Cell>
      </StatusBar>
    </Page>
  );
}
